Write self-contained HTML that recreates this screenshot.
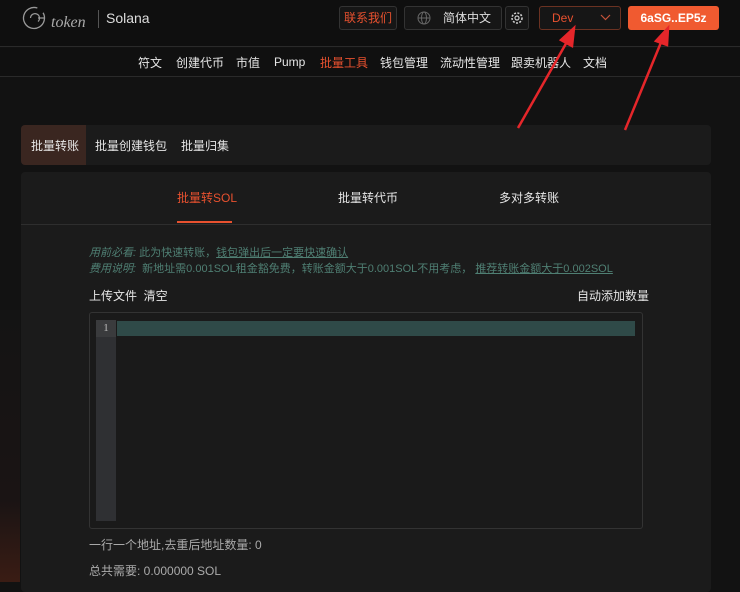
<!DOCTYPE html>
<html><head><meta charset="utf-8"><style>
*{margin:0;padding:0;box-sizing:border-box}
body{width:740px;height:582px;overflow:hidden;background:#121212;font-family:"Liberation Sans","Noto Sans CJK SC",sans-serif;color:#e6e6e6;position:relative}
.abs{position:absolute}
.hdr{left:0;top:0;width:740px;height:47px;background:#0f0f0f;border-bottom:1px solid #2a2a2a}
.nav{left:0;top:48px;width:740px;height:29px;background:#101010;border-bottom:1px solid #2a2a2a;font-size:12px}
.nav span{position:absolute;top:6px;color:#e6e6e6}
.btn{border:1px solid #333;border-radius:3px;background:#161616;font-size:12px;text-align:center}
.card{background:#1b1b1b;border-radius:4px}
.t12{font-size:12px}
</style></head><body>
<div class="abs hdr"></div>
<svg class="abs" style="left:22px;top:5px" width="72" height="26" viewBox="0 0 72 26">
<circle cx="12" cy="13" r="10.5" fill="none" stroke="#999" stroke-width="1.3" stroke-dasharray="58 8" transform="rotate(-30 12 13)"/>
<path d="M8.5 13 a4.5 4.5 0 1 1 7.5 3.5 M16 13 h6" fill="none" stroke="#999" stroke-width="1.2"/>
<text x="29" y="22" font-family="Liberation Serif" font-style="italic" font-size="16" fill="#aaa">token</text>
</svg>
<div class="abs" style="left:98px;top:10px;width:1px;height:18px;background:#555"></div>
<div class="abs" style="left:106px;top:10px;font-size:14px;color:#ddd">Solana</div>
<div class="abs btn" style="left:339px;top:6px;width:58px;height:24px;line-height:22px;color:#e8512f">联系我们</div>
<div class="abs btn" style="left:404px;top:6px;width:98px;height:24px;line-height:22px;color:#ddd;padding-left:28px">简体中文</div>
<svg class="abs" style="left:417px;top:11px" width="14" height="14" viewBox="0 0 14 14"><circle cx="7" cy="7" r="6" fill="none" stroke="#666"/><ellipse cx="7" cy="7" rx="2.5" ry="6" fill="none" stroke="#666"/><path d="M1 7h12" stroke="#666"/></svg>
<div class="abs btn" style="left:505px;top:6px;width:24px;height:24px"></div>
<svg class="abs" style="left:510px;top:11px" width="14" height="14" viewBox="0 0 14 14"><circle cx="7" cy="7" r="2" fill="none" stroke="#ccc" stroke-width="1.2"/><circle cx="7" cy="7" r="5" fill="none" stroke="#ccc" stroke-width="1.6" stroke-dasharray="2 1.4"/></svg>
<div class="abs" style="left:539px;top:6px;width:82px;height:24px;border:1px solid #6b3222;border-radius:3px;background:#161616;font-size:12px;color:#e8512f;line-height:22px;padding-left:12px">Dev</div>
<svg class="abs" style="left:600px;top:14px" width="11" height="7" viewBox="0 0 11 7"><path d="M1 1l4.5 4.5L10 1" fill="none" stroke="#c5533a" stroke-width="1.2"/></svg>
<div class="abs" style="left:628px;top:6px;width:91px;height:24px;background:#f05a30;border-radius:3px;font-size:12px;font-weight:bold;color:#fff;text-align:center;line-height:24px">6aSG..EP5z</div>
<div class="abs nav">
<span style="left:138px">符文</span><span style="left:176px">创建代币</span><span style="left:236px">市值</span><span style="left:274px;top:7px">Pump</span><span style="left:320px;color:#e8512f">批量工具</span><span style="left:380px">钱包管理</span><span style="left:440px">流动性管理</span><span style="left:511px">跟卖机器人</span><span style="left:583px">文档</span>
</div>
<div class="abs" style="left:0;top:310px;width:20px;height:272px;background:linear-gradient(#141414,#1a1414 70%,#3a1c14)"></div>
<div class="abs card" style="left:21px;top:125px;width:690px;height:40px"></div>
<div class="abs" style="left:21px;top:125px;width:65px;height:40px;background:#3a2620;border-radius:4px 0 0 4px"></div>
<div class="abs t12" style="left:31px;top:137px;color:#e6e6e6">批量转账</div>
<div class="abs t12" style="left:95px;top:137px">批量创建钱包</div>
<div class="abs t12" style="left:181px;top:137px">批量归集</div>
<div class="abs card" style="left:21px;top:172px;width:690px;height:420px"></div>
<div class="abs" style="left:21px;top:224px;width:690px;height:1px;background:#2e2e2e"></div>
<div class="abs t12" style="left:177px;top:189px;color:#e8512f">批量转SOL</div>
<div class="abs" style="left:177px;top:221px;width:55px;height:2px;background:#e8512f"></div>
<div class="abs t12" style="left:338px;top:189px">批量转代币</div>
<div class="abs t12" style="left:499px;top:189px">多对多转账</div>
<div class="abs" style="left:89px;top:245px;font-size:11px;color:#4f7f73;line-height:16px">
<i>用前必看:</i> 此为快速转账，<u>钱包弹出后一定要快速确认</u><br>
<i>费用说明:</i>&nbsp; 新地址需0.001SOL租金豁免费，转账金额大于0.001SOL不用考虑，&nbsp;<u>推荐转账金额大于0.002SOL</u></div>
<div class="abs t12" style="left:89px;top:287px">上传文件&nbsp; 清空</div>
<div class="abs t12" style="left:577px;top:287px">自动添加数量</div>
<div class="abs" style="left:89px;top:312px;width:554px;height:217px;border:1px solid #333;border-radius:3px;background:#1a1a1a"></div>
<div class="abs" style="left:96px;top:320px;width:20px;height:201px;background:#2f3033"></div>
<div class="abs" style="left:96px;top:320px;width:20px;height:17px;background:#3a3b3d;font-size:11px;color:#bbb;text-align:center;line-height:17px;font-family:'Liberation Serif',serif">1</div>
<div class="abs" style="left:117px;top:321px;width:518px;height:15px;background:#2f4a48"></div>
<div class="abs t12" style="left:89px;top:536px;color:#aaa">一行一个地址,去重后地址数量: 0</div>
<div class="abs t12" style="left:89px;top:562px;color:#aaa">总共需要: 0.000000 SOL</div>
<svg class="abs" style="left:0;top:0" width="740" height="582">
<g stroke="#e5262a" stroke-width="2.5" fill="#e5262a">
<line x1="518" y1="128" x2="568" y2="40"/><polygon points="574,28 561,40 572,46"/>
<line x1="625" y1="130" x2="662" y2="40"/><polygon points="668,28 656,41 667,45"/>
</g></svg>
</body></html>
